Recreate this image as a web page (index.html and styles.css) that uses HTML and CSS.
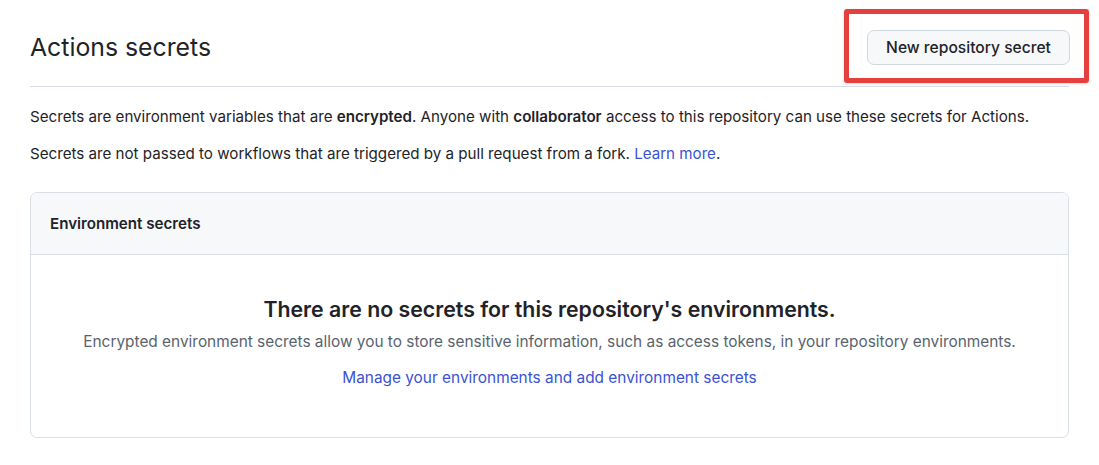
FILE: index.html
```html
<!DOCTYPE html>
<html lang="en">
<head>
<meta charset="utf-8">
<title>Actions secrets</title>
<link rel="stylesheet" href="styles.css">
</head>
<body>
<div class="page">
  <div class="subhead">
    <h2 class="subhead-title">Actions secrets</h2>
    <div class="action">
      <button class="btn">New repository secret</button>
      <span class="highlight"></span>
    </div>
  </div>
  <p class="note note-first">Secrets are environment variables that are <strong>encrypted</strong>. Anyone with <strong>collaborator</strong> access to this repository can use these secrets for Actions.</p>
  <p class="note">Secrets are not passed to workflows that are triggered by a pull request from a fork. <a href="#" class="link">Learn more</a>.</p>
  <div class="box">
    <div class="box-header">Environment secrets</div>
    <div class="blankslate">
      <h3 class="blank-title">There are no secrets for this repository's environments.</h3>
      <p class="blank-desc">Encrypted environment secrets allow you to store sensitive information, such as access tokens, in your repository environments.</p>
      <a href="#" class="link blank-link">Manage your environments and add environment secrets</a>
    </div>
  </div>
</div>
</body>
</html>
```
FILE: styles.css
```css
* { box-sizing: border-box; }
html, body { margin: 0; padding: 0; background: #ffffff; }
body {
  font-family: Inter, "Noto Sans", "Liberation Sans", sans-serif;
  color: #1f2328;
  font-size: 15.15px;
  line-height: 22px;
}
.page { width: 1039px; margin-left: 30px; }
.subhead {
  display: flex;
  justify-content: space-between;
  align-items: center;
  padding: 29px 0 21px;
  border-bottom: 1px solid #d8dee4;
}
.subhead-title {
  margin: 0;
  font-size: 24.8px;
  font-weight: 400;
  line-height: 36px;
}
.action { position: relative; margin-right: -1px; }
.btn {
  display: block;
  height: 35px;
  width: 203px;
  padding: 0 12px;
  font-family: inherit;
  font-size: 15.6px;
  font-weight: 500;
  color: #1f2328;
  background: #f6f8fa;
  border: 1px solid #d0d7de;
  border-radius: 7px;
}
.highlight {
  position: absolute;
  left: -23px;
  right: -19px;
  top: -21px;
  bottom: -18px;
  border: 5px solid #e5403e;
  border-radius: 3px;
  box-shadow: 0 1px 3px rgba(0,0,0,0.15);
  pointer-events: none;
}
.note { margin: 0; }
.note-first { margin-top: 19px; margin-bottom: 15px; }
.note strong { font-weight: 600; }
.link { color: #3b52d4; text-decoration: none; }
.box {
  margin-top: 27px;
  border: 1px solid #d8dee4;
  border-radius: 7px;
  overflow: hidden;
}
.box-header {
  background: #f6f8fa;
  padding: 20px 19px 19px;
  border-bottom: 1px solid #d8dee4;
  font-weight: 600;
}
.blankslate {
  text-align: center;
  padding: 39px 20px 48px;
}
.blank-title {
  margin: 0 0 7px;
  font-size: 21.3px;
  font-weight: 600;
  line-height: 30px;
}
.blank-desc {
  margin: 0 0 14px;
  font-size: 15.4px;
  color: #59636e;
}
.blank-link { display: inline-block; font-size: 15.4px; }
```
